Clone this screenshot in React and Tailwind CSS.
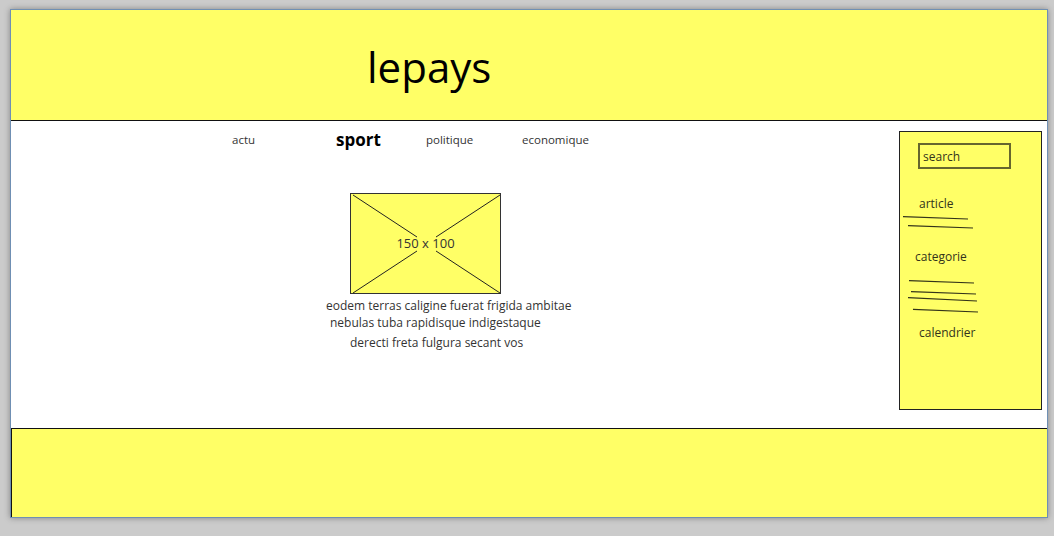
import React from "react";

const font = { fontFamily: '"Comic Sans MS", "Open Sans", sans-serif' };

const Placeholder = () => (
  <div className="relative w-[151px] h-[101px] bg-[#ffff66] border border-[#333] flex items-center justify-center">
    <svg className="absolute inset-0" width="151" height="101" viewBox="0 0 151 101">
      <g stroke="#222" strokeWidth="1" fill="none">
        <line x1="2" y1="1" x2="66" y2="43" />
        <line x1="85" y1="57" x2="149" y2="99" />
        <line x1="149" y1="1" x2="85" y2="43" />
        <line x1="66" y1="57" x2="2" y2="99" />
      </g>
    </svg>
    <span className="relative text-[13px] text-[#333]">150 x 100</span>
  </div>
);

const Sidebar = () => (
  <aside className="mt-[10px] w-[143px] h-[279px] bg-[#ffff66] border border-[#222] flex flex-col text-[12px] leading-4 text-[#33331a]">
    <div className="mt-[11px] ml-[18px] w-[93px] h-[26px] border-2 border-[#66662e] flex items-center pl-[3px] pt-[2px]">
      search
    </div>
    <div className="mt-[27px] ml-[19px]">article</div>
    <svg width="140" height="20" viewBox="0 0 140 20">
      <g stroke="#33331a" strokeWidth="1.2">
        <line x1="3" y1="4.7" x2="68" y2="7" />
        <line x1="8" y1="13.7" x2="73" y2="16" />
      </g>
    </svg>
    <div className="mt-[17px] ml-[15px]">categorie</div>
    <svg width="140" height="53" viewBox="0 0 140 53">
      <g stroke="#33331a" strokeWidth="1.2">
        <line x1="9" y1="15.7" x2="74" y2="18" />
        <line x1="11" y1="26.7" x2="76" y2="29" />
        <line x1="8" y1="32.7" x2="77" y2="36" />
        <line x1="13" y1="44.3" x2="78" y2="47" />
      </g>
    </svg>
    <div className="mt-[7px] ml-[19px]">calendrier</div>
  </aside>
);

export default function App() {
  return (
    <div className="min-h-[536px] bg-[#cbcbcb] pt-[9px] pl-[10px]" style={font}>
      <div className="w-[1038px] h-[509px] border border-[#6f8fb3] bg-white flex flex-col shadow-[0_0_6px_rgba(0,0,0,0.35)]">
        <header className="h-[111px] bg-[#ffff66] border-b border-[#111] flex items-center pt-[4px]">
          <h1 className="ml-[356px] w-[122px] text-center text-[42px] text-black leading-none">lepays</h1>
        </header>

        <div className="h-[307px] flex">
          <main className="flex-1 flex flex-col">
            <nav className="mt-[9px] h-[20px] pl-[221px] flex items-center text-[11.5px] text-[#333]">
              <span className="w-[104px]">actu</span>
              <span className="w-[90px] text-[17px] font-bold text-black">sport</span>
              <span className="w-[96px]">politique</span>
              <span>economique</span>
            </nav>
            <div className="mt-[43px] ml-[339px]">
              <Placeholder />
            </div>
            <div className="text-[12px] leading-[17px] text-[#333]">
              <p className="mt-[3px] ml-[315px]">eodem terras caligine fuerat frigida ambitae</p>
              <p className="ml-[319px]">nebulas tuba rapidisque indigestaque</p>
              <p className="mt-[3px] ml-[339px]">derecti freta fulgura secant vos</p>
            </div>
          </main>
          <div className="w-[148px]">
            <Sidebar />
          </div>
        </div>

        <footer className="flex-1 bg-[#ffff66] border-t border-[#111] border-l" />
      </div>
    </div>
  );
}
